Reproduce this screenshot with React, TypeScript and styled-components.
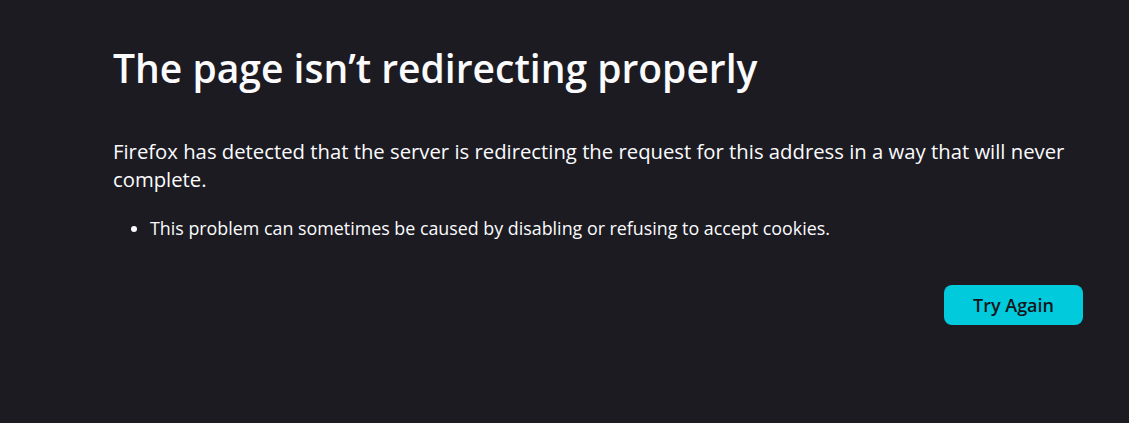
import styled, { createGlobalStyle } from 'styled-components';

const GlobalStyle = createGlobalStyle`
  html, body {
    margin: 0;
    padding: 0;
    background: #1c1b22;
  }
  body {
    font-family: "Open Sans", "Noto Sans", sans-serif;
    color: #fbfbfe;
  }
`;

export default function App() {
  return (
    <>
      <GlobalStyle />
      <Page>
        <Container>
          <Title>The page isn’t redirecting properly</Title>
          <Description>
            Firefox has detected that the server is redirecting the request for this address in a way that will never
            complete.
          </Description>
          <Hints>
            <li>This problem can sometimes be caused by disabling or refusing to accept cookies.</li>
          </Hints>
          <ButtonRow>
            <PrimaryButton type="button">Try Again</PrimaryButton>
          </ButtonRow>
        </Container>
      </Page>
    </>
  );
}

const Page = styled.div`
  min-height: 423px;
  box-sizing: border-box;
  padding: 42px 0 0 113px;
`;

const Container = styled.div`
  width: 970px;
`;

const Title = styled.h1`
  margin: 0;
  font-size: 39px;
  font-weight: 600;
  line-height: 52px;
`;

const Description = styled.p`
  margin: 43px 0 0;
  font-size: 20.3px;
  line-height: 28px;
`;

const Hints = styled.ul`
  margin: 23px 0 0;
  padding-left: 37px;
  font-size: 17.85px;
  line-height: 24px;
`;

const ButtonRow = styled.div`
  display: flex;
  justify-content: flex-end;
  margin-top: 45px;
`;

const PrimaryButton = styled.button`
  height: 40px;
  width: 139px;
  border: none;
  border-radius: 8px;
  background: #00cadb;
  color: #15141a;
  font-family: "Open Sans", "Noto Sans", sans-serif;
  font-size: 18px;
  font-weight: 600;
  cursor: pointer;
`;
